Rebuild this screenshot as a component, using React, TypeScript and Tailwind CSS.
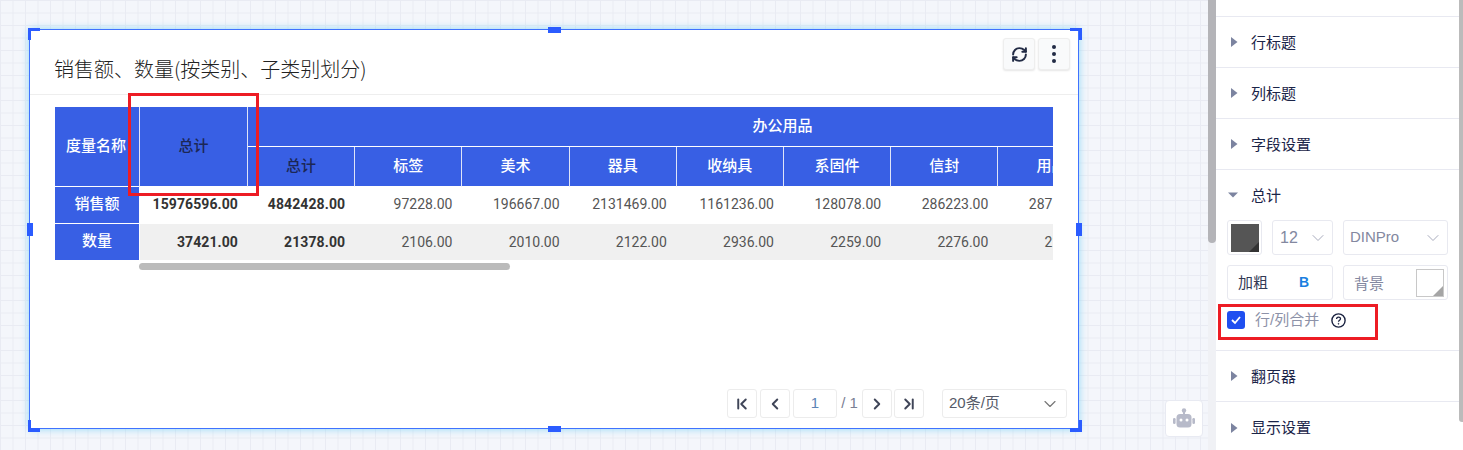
import { ChevronDown, ChevronFirst, ChevronLast, ChevronLeft, ChevronRight, RefreshCw } from "lucide-react";

const FONT = "[font-family:'Liberation_Sans','Noto_Sans_CJK_SC',sans-serif]";
const NUM = "[font-family:'Roboto','Noto_Sans_CJK_SC',sans-serif]";
const HEAD = "bg-[#385fe4] flex items-center justify-center pb-[3px] [font-family:'Noto_Sans_CJK_SC',sans-serif]";

const subHeads = ["总计", "标签", "美术", "器具", "收纳具", "系固件", "信封", "用品", "纸张", "装订机"];
const sales = ["15976596.00", "4842428.00", "97228.00", "196667.00", "2131469.00", "1161236.00", "128078.00", "286223.00", "287536.00", "69020.00", "103212.00"];
const qty = ["37421.00", "21378.00", "2106.00", "2010.00", "2122.00", "2936.00", "2259.00", "2276.00", "2218.00", "1980.00", "1201.00"];

function Tri({ open }: { open?: boolean }) {
  return (
    <svg width="10" height="10" viewBox="0 0 10 10" className="shrink-0">
      {open ? <path d="M0 2.5h10L5 7.5z" fill="#7c84a0" /> : <path d="M2 0l6.5 5L2 10z" fill="#7c84a0" />}
    </svg>
  );
}

function Section({ label, last }: { label: string; last?: boolean }) {
  return (
    <div className={"h-[51px] flex items-center pl-[13px] gap-[12px] text-[15px] text-[#1a2448] shrink-0 " + (last ? "" : "border-b border-[#e8e9f1]")}>
      <Tri />
      <span className="pt-[2px]">{label}</span>
    </div>
  );
}

function PageBtn({ children }: { children: React.ReactNode }) {
  return (
    <div className="w-[30px] h-[29px] rounded-[3px] border border-[#ececec] flex items-center justify-center text-[#3f4558]">
      {children}
    </div>
  );
}

function Handle({ className }: { className: string }) {
  return <div className={"absolute bg-[#2b5cff] " + className} />;
}

function Robot() {
  return (
    <svg width="24" height="24" viewBox="0 0 24 24" fill="#b7bac9">
      <circle cx="12" cy="3.5" r="2.2" />
      <rect x="11" y="4" width="2" height="4" />
      <rect x="4.5" y="7" width="15" height="13.5" rx="3.5" />
      <rect x="1" y="11" width="2.6" height="6" rx="1.2" />
      <rect x="20.4" y="11" width="2.6" height="6" rx="1.2" />
      <circle cx="9" cy="13" r="1.5" fill="#fff" />
      <circle cx="15" cy="13" r="1.5" fill="#fff" />
    </svg>
  );
}

export default function App() {
  return (
    <div className={"relative w-[1463px] h-[450px] overflow-hidden flex bg-white " + FONT}>
      {/* canvas */}
      <div className="relative w-[1208px] h-full shrink-0 pl-[29px] pt-[29px] bg-[#f4f6fb] bg-[linear-gradient(#e9ebf3_1px,transparent_1px),linear-gradient(90deg,#e9ebf3_1px,transparent_1px)] bg-[size:12.5px_12.5px]">
        {/* card */}
        <div className="relative w-[1050px] h-[400px] bg-white border border-[#3f72ff] shadow-[0_0_8px_#8fd8f7] flex flex-col">
          <div className="h-[65px] shrink-0 border-b border-[#eeeeee] flex justify-between pl-[24px] pr-[8px]">
            <div className="pt-[25px] text-[20px] leading-[28px] text-[#222222] font-light [font-family:'Noto_Sans_CJK_SC',sans-serif]">销售额、数量(按类别、子类别划分)</div>
            <div className="flex gap-[3px] pt-[8px]">
              <div className="w-[32px] h-[32px] rounded-[3px] bg-[#f9fafb] border border-[#eeeeee] shadow-[0_1px_2px_#e6e6e6] flex items-center justify-center">
                <RefreshCw size={17} strokeWidth={2.8} color="#222b45" />
              </div>
              <div className="w-[32px] h-[32px] rounded-[3px] bg-[#f9fafb] border border-[#eeeeee] shadow-[0_1px_2px_#e6e6e6] flex flex-col gap-[3px] items-center justify-center">
                <span className="w-[4px] h-[4px] rounded-full bg-[#222b45]" />
                <span className="w-[4px] h-[4px] rounded-full bg-[#222b45]" />
                <span className="w-[4px] h-[4px] rounded-full bg-[#222b45]" />
              </div>
            </div>
          </div>

          {/* table */}
          <div className="ml-[25px] mt-[12px] w-[998px] overflow-hidden shrink-0">
            <div className="grid w-max grid-cols-[85px_108px_repeat(10,107.2px)] grid-rows-[40px_40px_37px_36px] text-[15px] font-medium">
              <div className={"row-span-2 text-white border-r border-b border-r-[#dfe4f8] border-b-white pr-[2px] " + HEAD}>度量名称</div>
              <div className={"row-span-2 text-[#1c2755] border-r border-b border-r-[#dfe4f8] border-b-white " + HEAD}>总计</div>
              <div className={"col-span-10 text-white border-b border-white pr-[3px] " + HEAD}>办公用品</div>
              {subHeads.map((h, i) => (
                <div key={h} className={"border-r border-b border-r-[#dfe4f8] border-b-white " + HEAD + (i === 0 ? " text-[#1c2755]" : " text-white")}>{h}</div>
              ))}
              <div className={"text-white border-r border-b border-white " + HEAD}>销售额</div>
              {sales.map((v, i) => (
                <div key={i} className={"bg-white flex items-center justify-end pb-[2px] pr-[10px] " + NUM + (i < 2 ? " font-bold text-[14px] tracking-[0.1px] text-[#333333]" : " font-normal text-[14px] text-[#555555]")}>{v}</div>
              ))}
              <div className={"text-white border-r border-white " + HEAD}>数量</div>
              {qty.map((v, i) => (
                <div key={i} className={"bg-[#f0f0f0] flex items-center justify-end pr-[10px] " + NUM + (i < 2 ? " font-bold text-[14px] tracking-[0.1px] text-[#333333]" : " font-normal text-[14px] text-[#555555]")}>{v}</div>
              ))}
            </div>
          </div>
          <div className="ml-[109px] mt-[3px] w-[371px] h-[7px] rounded-full bg-[#bbbbbb] shrink-0" />

          {/* pagination */}
          <div className="mt-auto mb-[10px] flex items-center pl-[697px] text-[15px] text-[#5c6070]">
            <div className="flex gap-[3px] items-center">
              <PageBtn><ChevronFirst size={18} strokeWidth={2.6} /></PageBtn>
              <PageBtn><ChevronLeft size={18} strokeWidth={2.6} /></PageBtn>
              <div className="w-[44px] h-[29px] rounded-[3px] border border-[#ececec] flex items-center justify-center text-[#5d84b5]">1</div>
            </div>
            <span className="w-[25px] text-center text-[#7a8094]">/ 1</span>
            <div className="flex gap-[2px] items-center">
              <PageBtn><ChevronRight size={18} strokeWidth={2.6} /></PageBtn>
              <PageBtn><ChevronLast size={18} strokeWidth={2.6} /></PageBtn>
            </div>
            <div className="ml-[18px] w-[125px] h-[29px] rounded-[3px] border border-[#ececec] flex items-center justify-between pl-[6px] pr-[6px] text-[#555a68]">
              <span>20条/页</span>
              <ChevronDown size={20} strokeWidth={1.4} color="#777" />
            </div>
          </div>

          {/* selection handles */}
          <Handle className="left-[-2px] top-[-2px] w-[12px] h-[3px]" />
          <Handle className="left-[-2px] top-[-2px] w-[3px] h-[12px]" />
          <Handle className="right-[-4px] top-[-2px] w-[12px] h-[3px]" />
          <Handle className="right-[-4px] top-[-2px] w-[3px] h-[12px]" />
          <Handle className="left-[-2px] bottom-[-4px] w-[12px] h-[4px]" />
          <Handle className="left-[-2px] bottom-[-4px] w-[3px] h-[12px]" />
          <Handle className="right-[-4px] bottom-[-4px] w-[12px] h-[4px]" />
          <Handle className="right-[-4px] bottom-[-4px] w-[3px] h-[12px]" />
          <Handle className="left-[518px] top-[-3px] w-[13px] h-[6px]" />
          <Handle className="left-[518px] bottom-[-4px] w-[13px] h-[6px]" />
          <Handle className="left-[-3px] top-[193px] w-[6px] h-[13px]" />
          <Handle className="right-[-4px] top-[193px] w-[6px] h-[13px]" />
        </div>

        {/* robot */}
        <div className="absolute left-[1165px] top-[400px] w-[38px] h-[37px] bg-white rounded-[4px] border border-[#e8eaf2] flex items-center justify-center">
          <Robot />
        </div>
      </div>

      {/* scrollbar track */}
      <div className="w-[8px] h-full bg-[#f0f1f5] shrink-0">
        <div className="w-full h-[243px] bg-[#b4b4b8] rounded-b-[4px]" />
      </div>

      {/* side panel */}
      <div className="flex-1 h-full flex flex-col bg-white">
        <div className="h-[17px] shrink-0 border-b border-[#e8e9f1]" />
        <Section label="行标题" />
        <Section label="列标题" />
        <Section label="字段设置" />
        <div className="h-[181px] shrink-0 border-b border-[#e8e9f1] pl-[11px] flex flex-col">
          <div className="h-[50px] flex items-center gap-[13px] pl-[1px] text-[15px] text-[#1a2448] shrink-0">
            <Tri open />
            <span className="pt-[2px]">总计</span>
          </div>
          <div className="flex gap-[10px] h-[35px] shrink-0">
            <div className="w-[35px] h-full rounded-[3px] border border-[#e8e9f0] flex items-center justify-center">
              <svg width="28" height="28" viewBox="0 0 28 28">
                <rect width="28" height="28" fill="#555555" />
                <path d="M28 18v10H18z" fill="#333333" />
              </svg>
            </div>
            <div className="w-[61px] h-full rounded-[3px] border border-[#e8e9f0] flex items-center justify-between pl-[7px] pr-[4px] text-[16px] text-[#8388a0]">
              <span>12</span>
              <ChevronDown size={20} strokeWidth={1.2} color="#a8abbd" />
            </div>
            <div className="w-[105px] h-full rounded-[3px] border border-[#e8e9f0] flex items-center justify-between pl-[6px] pr-[4px] text-[15px] text-[#8388a0]">
              <span>DINPro</span>
              <ChevronDown size={20} strokeWidth={1.2} color="#a8abbd" />
            </div>
          </div>
          <div className="flex gap-[10px] h-[35px] mt-[10px] shrink-0">
            <div className="w-[106px] h-full rounded-[3px] border border-[#e8e9f0] flex items-center pl-[10px] pr-[23px] justify-between text-[15px] text-[#333a55]">
              <span className="pt-[2px]">加粗</span>
              <span className="font-bold text-[14px] text-[#1b7fe0]">B</span>
            </div>
            <div className="w-[105px] h-full rounded-[3px] border border-[#e8e9f0] flex items-center justify-between pl-[10px] pr-[3px] text-[15px] text-[#8388a0]">
              <span className="pt-[3px]">背景</span>
              <svg width="28" height="28" viewBox="0 0 28 28">
                <rect x="0.5" y="0.5" width="27" height="27" fill="#fff" stroke="#c8c8c8" />
                <path d="M27 17v10H17z" fill="#a5a5a5" />
              </svg>
            </div>
          </div>
          <div className="flex items-center mt-[11px] h-[18px] shrink-0 text-[15px] text-[#8d92a8]">
            <div className="w-[18px] h-[18px] rounded-[3px] bg-[#1f4ff0] flex items-center justify-center">
              <svg width="12" height="12" viewBox="0 0 12 12" fill="none" stroke="#fff" strokeWidth="1.8"><path d="M2 6l3 3 5-6" /></svg>
            </div>
            <span className="ml-[10px]">行/列合并</span>
            <svg className="ml-[12px]" width="15" height="15" viewBox="0 0 15 15" fill="none" stroke="#1a2240">
              <circle cx="7.5" cy="7.5" r="6.6" strokeWidth="1.4" />
              <path d="M5.6 6c0-2.5 3.9-2.5 3.9-.3 0 1.4-2 1.5-2 3" strokeWidth="1.3" />
              <circle cx="7.5" cy="10.8" r="0.5" fill="#1a2240" strokeWidth="0.6" />
            </svg>
          </div>
        </div>
        <Section label="翻页器" />
        <Section label="显示设置" last />
      </div>

      {/* right scrollbar */}
      <div className="w-[4px] h-[422px] bg-[#bbbbbb] rounded-bl-[3px] shrink-0" />

      {/* annotation boxes */}
      <div className="absolute left-[128px] top-[93px] w-[131px] h-[103px] border-[3px] border-[#ed1c24]" />
      <div className="absolute left-[1218px] top-[304px] w-[160px] h-[36px] border-[3px] border-[#ed1c24]" />
    </div>
  );
}
